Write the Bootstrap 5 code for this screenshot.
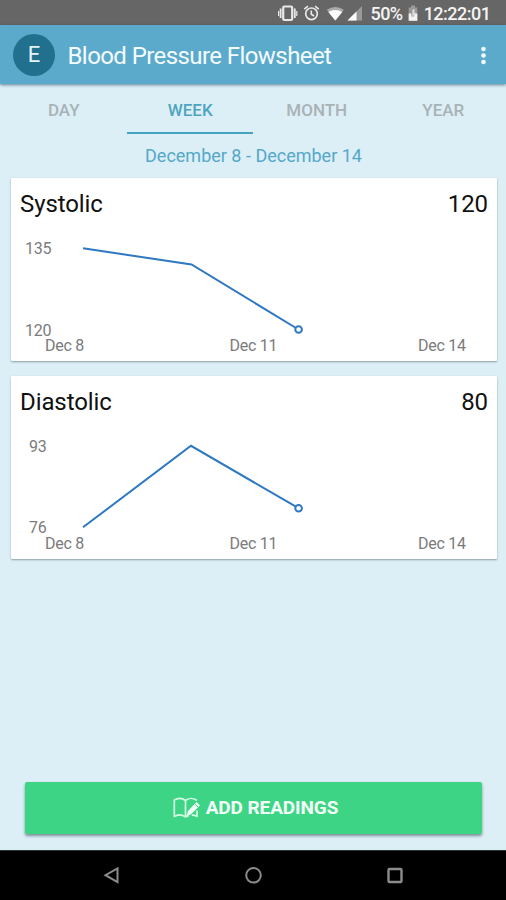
<!DOCTYPE html>
<html lang="en">
<head>
<meta charset="utf-8">
<meta name="viewport" content="width=device-width, initial-scale=1">
<title>Blood Pressure Flowsheet</title>
<link href="https://cdn.jsdelivr.net/npm/bootstrap@5.3.0/dist/css/bootstrap.min.css" rel="stylesheet">
<style>
  body { font-family: Roboto, "Liberation Sans", sans-serif; background: #dceff7; color: #111; line-height: 1; }
  .screen { height: 900px; overflow: hidden; }
  .status-strip { height: 25px; background: #666; color: #f4f4f4; padding: 2px 15.5px 0 0; font-size: 18px; font-weight: 500; letter-spacing: -.5px; }
  .status-strip svg { flex: none; margin-top: -2px; }
  .clock { margin-left: 5px; }
  .app-bar { height: 59px; background: #5baacb; padding: 0 20px 0 13px; box-shadow: 0 1px 3px rgba(30,70,90,.65); z-index: 1; }
  .avatar { width: 42px; height: 42px; background: #21708e; color: #e6f3f8; font-size: 22px; padding-top: 1px; }
  .app-title { font-size: 24px; letter-spacing: -.58px; color: #f3fbff; margin: 3px 0 0 12.500px; }
  .period-tabs { height: 50px; }
  .period-tabs .nav-link { height: 50px; padding: 4px 0 0 1px; font-size: 17px; font-weight: 500; color: #a9b2b5; border-radius: 0; border-bottom: 2px solid transparent; }
  .period-tabs .nav-link.active { color: #4fa5c0; border-bottom-color: #45a3bf; }
  .range { height: 44px; color: #55a8c8; font-size: 18px; padding-left: 1px; }
  .reading { height: 183px; margin: 0 9px 15px 11px; border: 0; border-radius: 1px; box-shadow: 0 1px 2px rgba(60,80,90,.5); }
  .reading-head { height: 50px; padding: 2px 9px 0; font-size: 24px; letter-spacing: -.1px; }
  .reading svg text { font-size: 16px; letter-spacing: -.25px; fill: #7b7b7b; }
  .trend { fill: none; stroke: #2f78c2; stroke-width: 2; }
  .trend-end { fill: #fff; stroke: #2f78c2; stroke-width: 2; }
  .btn-add { height: 52px; margin: 0 24px 16px 25px; padding: 0 10px 0 14px; background: #3dd485; color: #f2fff7; border: 0; border-radius: 2px; font-size: 19px; font-weight: 700; letter-spacing: -.1px; box-shadow: 0 2px 3px rgba(60,80,90,.6); }
  .btn-add svg { margin-right: 5px; }
  .btn-add:hover { background: #36c97b; color: #fff; }
  .system-nav { height: 50px; background: #000; border-top: 1px solid #2c3133; }
</style>
</head>
<body>
<div class="screen d-flex flex-column">
  <div class="status-strip d-flex align-items-center justify-content-end">
    <svg width="84" height="25" viewBox="0 0 84 25" fill="none" stroke="#e8e8e8" aria-hidden="true">
      <rect x="5.200" y="6.500" width="9" height="13.500" rx="1.200" stroke-width="2.200"/>
      <path d="M2.600 8.500v9.500M16.800 8.500v9.500" stroke-width="1.800"/><path d="M.6 11v5M18.800 11v5" stroke-width="1.200"/>
      <circle cx="33.500" cy="13.800" r="5.800" stroke-width="1.700"/><path d="M33.300 10.400v3.800l2.800 1.800M26.300 9.200l3.600-3M40.700 9.200l-3.600-3" stroke-width="1.600"/>
      <path d="M48.800 9.800q8.500-5.600 17 0L57.300 20.500z" fill="#aaa" stroke="none"/><path d="M50.300 12q7-4 14 0L57.300 20.500z" fill="#fff" stroke="none"/>
      <path d="M84 6v14.500H69.500z" fill="#999" stroke="none"/><path d="M78.500 11.500v9H69.500z" fill="#fff" stroke="none"/>
    </svg>
    <span class="ms-2">50%</span>
    <svg class="ms-1" width="12" height="25" viewBox="0 0 12 25" aria-hidden="true"><path d="M4 5.500h4v2h2.300v13.200H1.700V7.500H4z" fill="#999"/><path d="M1.700 13.500h2.600v3h3v-3h3v7.200H1.700z" fill="#f4f4f4"/><path d="M5.500 9.500H8l-1 3h1.700l-3.500 5z" fill="#ddd"/></svg>
    <span class="clock">12:22:01</span>
  </div>
  <header class="app-bar d-flex align-items-center position-relative">
    <div class="avatar rounded-circle d-flex align-items-center justify-content-center">E</div>
    <h1 class="app-title fw-normal">Blood Pressure Flowsheet</h1>
    <svg class="ms-auto" width="5" height="20" viewBox="0 0 5 20" fill="#f3fbff" aria-label="More"><circle cx="2.500" cy="4" r="2.300"/><circle cx="2.500" cy="10.500" r="2.300"/><circle cx="2.500" cy="17" r="2.300"/></svg>
  </header>
  <nav class="period-tabs nav nav-fill">
    <a class="nav-link col-3 d-flex align-items-center justify-content-center" href="#">DAY</a>
    <a class="nav-link col-3 d-flex align-items-center justify-content-center active" href="#">WEEK</a>
    <a class="nav-link col-3 d-flex align-items-center justify-content-center" href="#">MONTH</a>
    <a class="nav-link col-3 d-flex align-items-center justify-content-center" href="#">YEAR</a>
  </nav>
  <div class="range d-flex align-items-center justify-content-center">December 8 - December 14</div>
  <section class="reading card">
    <div class="reading-head d-flex align-items-center justify-content-between"><span>Systolic</span><span>120</span></div>
    <svg width="486" height="133" viewBox="11 228 486 133">
      <text x="25" y="254">135</text><text x="25" y="335.500">120</text>
      <text x="45" y="351">Dec 8</text><text x="229.500" y="351">Dec 11</text><text x="418" y="351">Dec 14</text>
      <path class="trend" d="M83 248.300L191.500 264.500L298.500 329.500"/><circle class="trend-end" cx="298.600" cy="329.500" r="3.300"/>
    </svg>
  </section>
  <section class="reading card">
    <div class="reading-head d-flex align-items-center justify-content-between"><span>Diastolic</span><span>80</span></div>
    <svg width="486" height="133" viewBox="11 426 486 133">
      <text x="29" y="451.500">93</text><text x="29" y="533">76</text>
      <text x="45" y="549">Dec 8</text><text x="229.500" y="549">Dec 11</text><text x="418" y="549">Dec 14</text>
      <path class="trend" d="M83 527.300L191 445.800L298.500 508.200"/><circle class="trend-end" cx="298.600" cy="508.200" r="3.300"/>
    </svg>
  </section>
  <button class="btn btn-add mt-auto d-flex align-items-center justify-content-center" type="button">
    <svg width="28" height="22" viewBox="0 0 28 22" fill="none" stroke="#d5fae4" stroke-width="1.700" stroke-linejoin="round" stroke-linecap="round" aria-hidden="true">
      <path d="M12.500 3.500C9 .8 4.500 1 1.300 3v16.500c3.200-2 7.700-2 11.200.4zM12.500 3.500C15.500 1 20 .8 23.300 3M12.500 19.900l2.500-1M24 14v5.500c-1.500-.9-3-1.300-4.500-1.300"/>
      <path d="M14.500 18l1-4L23.500 5.500l3 2.700-8.200 8.400z" fill="#f2fff7" stroke="#f2fff7" stroke-width="1"/><path d="M22 7.200l2.900 2.700" stroke="#3dd485" stroke-width="1"/>
    </svg>
    <span>ADD READINGS</span>
  </button>
  <footer class="system-nav flex-shrink-0">
    <svg class="d-block" width="506" height="49" viewBox="0 851 506 49" fill="none" stroke="#8c8c8c" stroke-width="2" aria-hidden="true">
      <path d="M117.500 868.500v13.500L105.500 875.200z"/><circle cx="253.500" cy="875.300" r="7.300"/><rect x="388.500" y="869" width="13" height="13" rx="1" stroke-width="2.400"/>
    </svg>
  </footer>
</div>
<script src="https://cdn.jsdelivr.net/npm/bootstrap@5.3.0/dist/js/bootstrap.bundle.min.js"></script>
</body>
</html>
